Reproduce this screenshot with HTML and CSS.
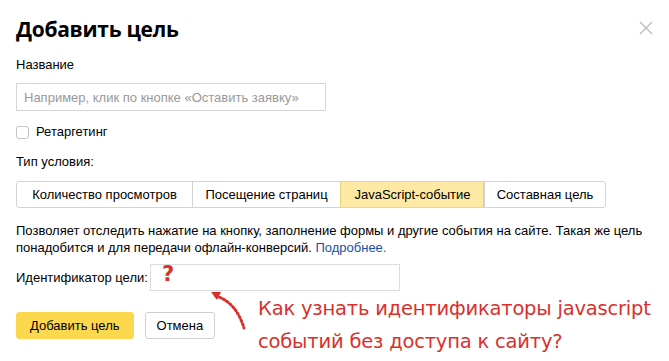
FILE: index.html
```html
<!DOCTYPE html>
<html lang="ru">
    <head>
        <meta charset="UTF-8" />
        <meta name="viewport" content="width=device-width, initial-scale=1.0" />
        <title>Добавить цель</title>
        <link rel="stylesheet" href="styles.css">
    </head>
    <body>
        <div class="dialog">
            <button class="close" aria-label="Закрыть">
                <svg width="14" height="14" viewBox="0 0 14 14">
                    <path d="M1 1L13 13M13 1L1 13" stroke="#bdbdbd" stroke-width="1.4" fill="none" />
                </svg>
            </button>

            <h1>Добавить цель</h1>

            <label class="label" for="goal-name">Название</label>
            <input
                type="text"
                id="goal-name"
                class="name-input"
                placeholder="Например, клик по кнопке «Оставить заявку»"
            />

            <label class="check">
                <span class="check-box"></span>
                Ретаргетинг
            </label>

            <div class="label type-label">Тип условия:</div>
            <div class="tabs">
                <div class="tab">Количество просмотров</div>
                <div class="tab">Посещение страниц</div>
                <div class="tab tab-active">JavaScript-событие</div>
                <div class="tab">Составная цель</div>
            </div>

            <p class="hint">Позволяет отследить нажатие на кнопку, заполнение формы и другие события на сайте. Такая же цель понадобится и для передачи офлайн-конверсий. <a href="#">Подробнее.</a></p>

            <div class="id-row">
                <label for="goal-id">Идентификатор цели:</label>
                <input type="text" id="goal-id" class="id-input" />
            </div>

            <div class="actions">
                <button class="btn btn-yellow">Добавить цель</button>
                <button class="btn">Отмена</button>
            </div>

            <!-- пометки поверх скриншота -->
            <span class="mark-question">?</span>
            <svg class="mark-arrow" width="50" height="50" viewBox="0 0 50 50">
                <path d="M8 8 Q 28 14 36 40" stroke="#d9302c" stroke-width="3" stroke-dasharray="1.5 2.5" stroke-linecap="round" fill="none" />
                <path d="M3 4 L13 4 L9 12 Z" fill="#d9302c" />
            </svg>
            <div class="mark-text">
                Как узнать идентификаторы javascript<br />
                событий без доступа к сайту?
            </div>
        </div>
    </body>
</html>
```

FILE: styles.css
```css
body {
    margin: 0;
    background-color: #fff;
    font-family: 'Liberation Sans', Arial, sans-serif;
    font-size: 13px;
    color: #000;
}
.dialog {
    position: relative;
    width: 669px;
    height: 361px;
    box-sizing: border-box;
    padding: 16px 16px 0 16px;
    display: flex;
    flex-direction: column;
    align-items: flex-start;
}
.close {
    position: absolute;
    top: 21px;
    right: 16px;
    padding: 0;
    border: none;
    background: none;
    cursor: pointer;
}
h1 {
    margin: 0;
    font-family: 'Open Sans', 'Liberation Sans', sans-serif;
    font-size: 21px;
    font-weight: 700;
    line-height: 26px;
    letter-spacing: -0.3px;
}
.label {
    display: block;
    line-height: 16px;
    margin-top: 15px;
}
.name-input {
    margin-top: 10px;
    width: 310px;
    height: 28px;
    box-sizing: border-box;
    border: 1px solid #d6d6d6;
    padding: 0 7px;
    font-family: inherit;
    font-size: 13px;
    outline: none;
}
.name-input::placeholder {
    color: #999;
}
.check {
    display: flex;
    align-items: center;
    gap: 7px;
    margin-top: 13px;
    line-height: 16px;
}
.check-box {
    width: 11px;
    height: 11px;
    border: 1px solid #c4c4c4;
    border-radius: 3px;
}
.type-label {
    margin-top: 14px;
}
.tabs {
    margin-top: 11px;
    display: grid;
    grid-template-columns: 175px 148px 144px 121px;
    height: 27px;
    border: 1px solid #d4d4d4;
    border-radius: 3px;
    box-sizing: border-box;
    overflow: hidden;
}
.tab {
    display: flex;
    align-items: center;
    justify-content: center;
    white-space: nowrap;
    border-left: 1px solid #d4d4d4;
}
.tab:first-child {
    border-left: none;
}
.tab-active {
    background-color: #fde9a4;
    border-left-color: #e5cf7c;
    box-shadow: inset -1px 0 0 #e5cf7c;
}
.hint {
    margin: 14px 0 0 0;
    width: 640px;
    line-height: 17px;
    font-size: 13px;
}
.hint a {
    color: #1a4fa0;
    text-decoration: none;
}
.id-row {
    margin-top: 8px;
    display: flex;
    align-items: center;
    gap: 2px;
}
.id-input {
    width: 250px;
    height: 27px;
    box-sizing: border-box;
    border: 1px solid #dcdcdc;
    outline: none;
}
.actions {
    margin-top: 21px;
    display: flex;
    gap: 11px;
}
.btn {
    height: 27px;
    padding: 0 11px;
    border: 1px solid #d0d0d0;
    border-radius: 3px;
    background-color: #fff;
    font-family: inherit;
    font-size: 13px;
    color: #000;
    cursor: pointer;
}
.btn-yellow {
    background-color: #fcd84f;
    border-color: #fcd84f;
    padding: 0 13px;
}
.mark-question {
    position: absolute;
    left: 162px;
    top: 262px;
    font-family: 'DejaVu Sans', sans-serif;
    font-size: 21px;
    font-weight: 700;
    color: #d9302c;
}
.mark-arrow {
    position: absolute;
    left: 208px;
    top: 288px;
}
.mark-text {
    position: absolute;
    left: 258px;
    top: 292px;
    font-family: 'DejaVu Sans', sans-serif;
    font-size: 19.5px;
    line-height: 33px;
    color: #d9302c;
    letter-spacing: -0.2px;
}
```
